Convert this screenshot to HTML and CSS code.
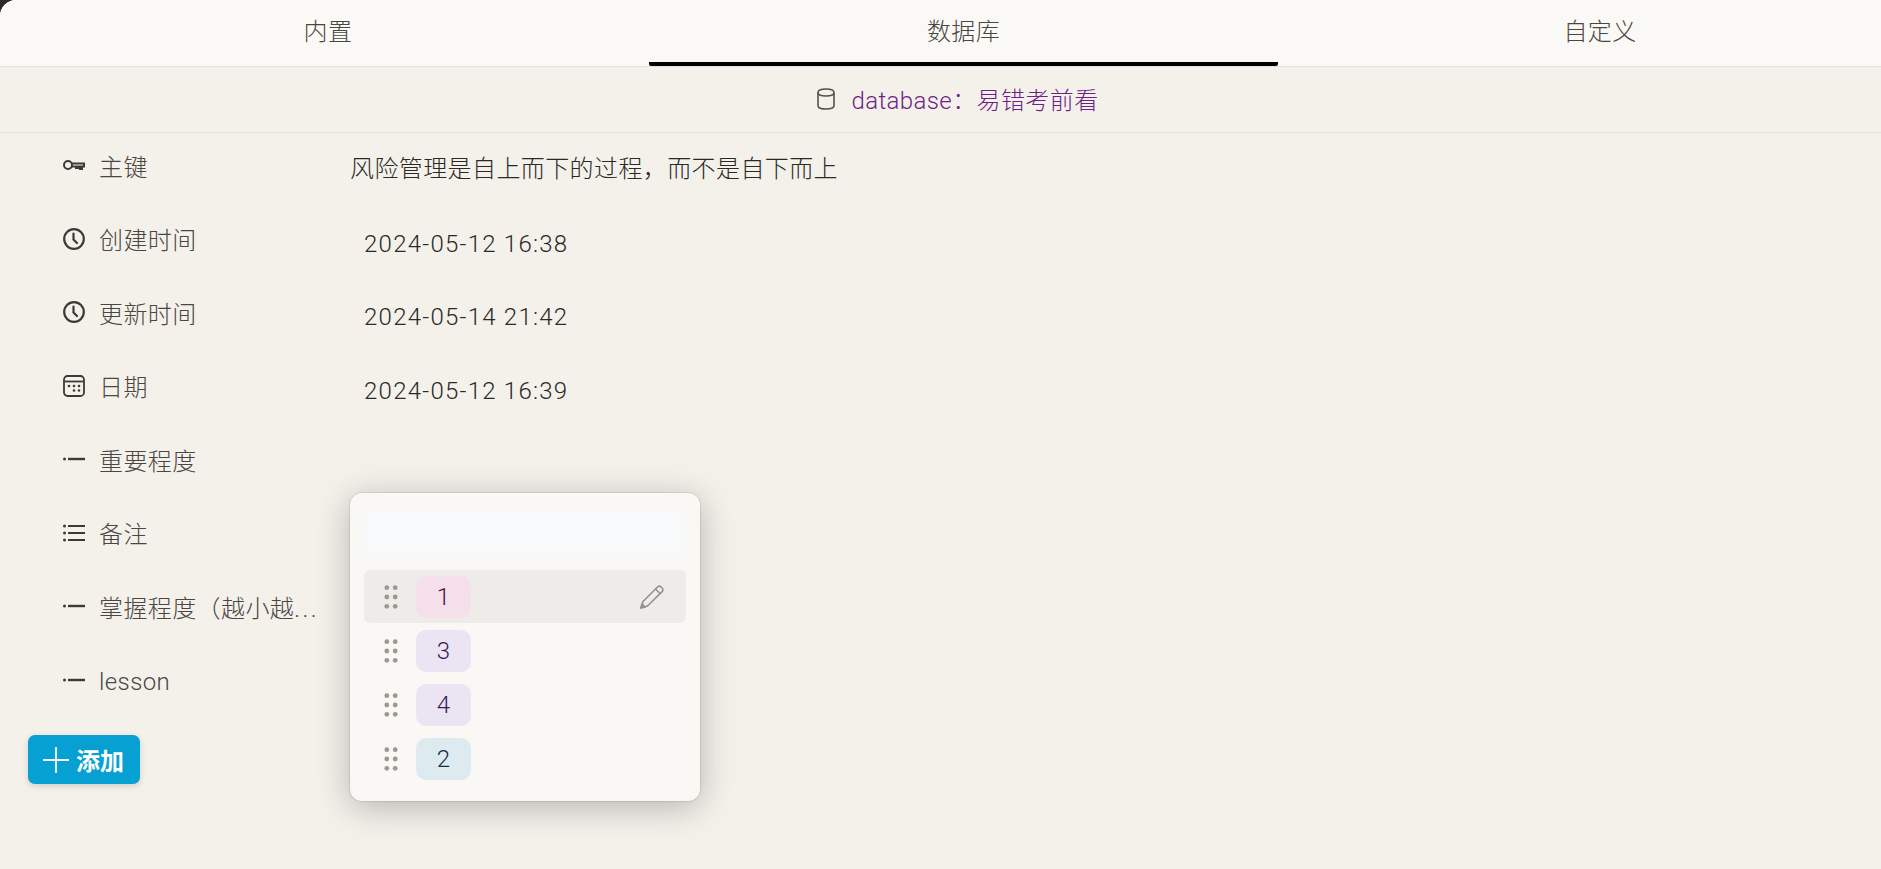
FILE: index.html
```html
<!DOCTYPE html>
<html lang="zh-CN">
<head>
    <meta charset="UTF-8">
    <title>属性面板</title>
    <link rel="stylesheet" href="styles.css">
</head>
<body>
    <div class="panel">
        <nav class="tabs">
            <div class="tab tab-first">内置</div>
            <div class="tab tab-active">数据库</div>
            <div class="tab tab-last">自定义</div>
        </nav>

        <div class="db-title">
            <svg class="db-icon" viewBox="0 0 20 24" width="20" height="24" fill="none" stroke="#55524d" stroke-width="1.6">
                <path d="M2 5.5C2 3 5 2 10 2s8 1 8 3.5v13c0 2.5-3 3.5-8 3.5s-8-1-8-3.5z"/>
                <path d="M2 5.5c0 2.5 3 3.5 8 3.5s8-1 8-3.5"/>
            </svg>
            <span class="db-name">database：易错考前看</span>
        </div>

        <main class="attrs">
            <div class="attr-row">
                <div class="attr-label">
                    <svg class="attr-icon" viewBox="0 0 22 22" fill="none" stroke="#3d3a36" stroke-width="2">
                        <circle cx="5" cy="11" r="4"/>
                        <path d="M9 9.5H21v3h-2V15h-2v-2.5h-2V14h-2v-1.5H9"/>
                    </svg>
                    <span>主键</span>
                </div>
                <div class="attr-value attr-text">风险管理是自上而下的过程，而不是自下而上</div>
            </div>
            <div class="attr-row">
                <div class="attr-label">
                    <svg class="attr-icon" viewBox="0 0 22 22" fill="none" stroke="#3d3a36" stroke-width="2.2">
                        <circle cx="11" cy="11" r="9.8"/>
                        <path d="M10.5 5.5v6l3.5 3.5" stroke-linecap="round"/>
                    </svg>
                    <span>创建时间</span>
                </div>
                <div class="attr-value attr-date">2024-05-12 16:38</div>
            </div>
            <div class="attr-row">
                <div class="attr-label">
                    <svg class="attr-icon" viewBox="0 0 22 22" fill="none" stroke="#3d3a36" stroke-width="2.2">
                        <circle cx="11" cy="11" r="9.8"/>
                        <path d="M10.5 5.5v6l3.5 3.5" stroke-linecap="round"/>
                    </svg>
                    <span>更新时间</span>
                </div>
                <div class="attr-value attr-date">2024-05-14 21:42</div>
            </div>
            <div class="attr-row">
                <div class="attr-label">
                    <svg class="attr-icon" viewBox="0 0 22 22" fill="none" stroke="#3d3a36" stroke-width="1.8">
                        <rect x="1" y="1" width="20" height="20" rx="3.5"/>
                        <path d="M1 6.5h20"/>
                        <g fill="#3d3a36" stroke="none">
                            <circle cx="6" cy="11" r="1.3"/><circle cx="11" cy="11" r="1.3"/><circle cx="16" cy="11" r="1.3"/>
                            <circle cx="11" cy="15.5" r="1.3"/><circle cx="16" cy="15.5" r="1.3"/>
                        </g>
                    </svg>
                    <span>日期</span>
                </div>
                <div class="attr-value attr-date">2024-05-12 16:39</div>
            </div>
            <div class="attr-row">
                <div class="attr-label">
                    <svg class="attr-icon" viewBox="0 0 22 22" fill="#3d3a36">
                        <circle cx="1.5" cy="11" r="1.5"/><rect x="5" y="9.8" width="17" height="2.4"/>
                    </svg>
                    <span>重要程度</span>
                </div>
            </div>
            <div class="attr-row">
                <div class="attr-label">
                    <svg class="attr-icon" viewBox="0 0 22 22" fill="#3d3a36">
                        <circle cx="1.5" cy="4" r="1.5"/><rect x="5" y="3" width="17" height="2"/>
                        <circle cx="1.5" cy="11" r="1.5"/><rect x="5" y="10" width="17" height="2"/>
                        <circle cx="1.5" cy="18" r="1.5"/><rect x="5" y="17" width="17" height="2"/>
                    </svg>
                    <span>备注</span>
                </div>
            </div>
            <div class="attr-row">
                <div class="attr-label">
                    <svg class="attr-icon" viewBox="0 0 22 22" fill="#3d3a36">
                        <circle cx="1.5" cy="11" r="1.5"/><rect x="5" y="9.8" width="17" height="2.4"/>
                    </svg>
                    <span>掌握程度（越小越<span class="ellipsis">...</span></span>
                </div>
            </div>
            <div class="attr-row">
                <div class="attr-label">
                    <svg class="attr-icon" viewBox="0 0 22 22" fill="#3d3a36">
                        <circle cx="1.5" cy="11" r="1.5"/><rect x="5" y="9.8" width="17" height="2.4"/>
                    </svg>
                    <span class="attr-latin">lesson</span>
                </div>
            </div>
            <button class="add-btn">
                <svg viewBox="0 0 26 26" width="26" height="26" stroke="#fff" stroke-width="1.8"><path d="M13 0v26M0 13h26"/></svg>
                <span>添加</span>
            </button>
        </main>

        <div class="select-menu">
            <div class="select-search"></div>
            <div class="select-item select-item-hover">
                <svg class="grip" viewBox="0 0 14 24" width="14" height="24"><use href="#grip-dots"/></svg>
                <span class="tag tag-pink">1</span>
                <svg class="edit-icon" viewBox="0 0 24 24" width="24" height="24" fill="none" stroke="#94918c" stroke-width="1.6" stroke-linejoin="round">
                    <path d="M1 23l2-6.5L17.5 2a2.6 2.6 0 0 1 3.6 0l1 1a2.6 2.6 0 0 1 0 3.6L7.5 21z"/>
                    <path d="M15.5 4L20 8.5"/>
                    <path d="M1 23l1-4 3 3z" fill="#94918c"/>
                </svg>
            </div>
            <div class="select-item">
                <svg class="grip" viewBox="0 0 14 24" width="14" height="24"><use href="#grip-dots"/></svg>
                <span class="tag tag-purple">3</span>
            </div>
            <div class="select-item">
                <svg class="grip" viewBox="0 0 14 24" width="14" height="24"><use href="#grip-dots"/></svg>
                <span class="tag tag-purple">4</span>
            </div>
            <div class="select-item">
                <svg class="grip" viewBox="0 0 14 24" width="14" height="24"><use href="#grip-dots"/></svg>
                <span class="tag tag-blue">2</span>
            </div>
        </div>
    </div>

    <svg class="svg-defs" width="0" height="0">
        <defs>
            <g id="grip-dots" fill="#9c9994">
                <circle cx="2.8" cy="2.7" r="2.4"/><circle cx="11.2" cy="2.7" r="2.4"/>
                <circle cx="2.8" cy="12" r="2.4"/><circle cx="11.2" cy="12" r="2.4"/>
                <circle cx="2.8" cy="21.3" r="2.4"/><circle cx="11.2" cy="21.3" r="2.4"/>
            </g>
        </defs>
    </svg>
</body>
</html>
```

FILE: styles.css
```css
* {
    margin: 0;
    padding: 0;
    box-sizing: border-box;
}

html, body {
    height: 100%;
    overflow: hidden;
}

body {
    font-family: "Roboto", "Noto Sans CJK SC", sans-serif;
    font-size: 24px;
    font-weight: 300;
    letter-spacing: 0.4px;
    color: #2b2926;
    background-color: #2b2a28;
}

.panel {
    position: relative;
    height: 869px;
    background-color: #f4f1eb;
    border-radius: 16px 0 0 0;
    overflow: hidden;
}

/* 顶部标签 */
.tabs {
    display: grid;
    grid-template-columns: 649px 629px 1fr;
    height: 67px;
    background-color: #faf9f5;
    border-bottom: 1px solid #e0e2e1;
}

.tab {
    display: flex;
    align-items: center;
    justify-content: center;
    height: 66px;
    padding-bottom: 7px;
    color: #4a4743;
}

.tab-first {
    padding-left: 7px;
}

.tab-last {
    padding-left: 41px;
}

.tab-active {
    padding-bottom: 3px;
    border-bottom: 4px solid #000;
    border-radius: 0 0 2px 2px;
}

.db-title {
    display: flex;
    align-items: center;
    justify-content: center;
    gap: 15px;
    height: 66px;
    padding: 0 0 2px 34px;
    border-bottom: 1px solid #e0dfdb;
}

.db-name {
    color: #6f1f85;
}

/* 属性列表 */
.attrs {
    padding-top: 1px;
}

.attr-row {
    display: flex;
    height: 73.5px;
}

.attr-label {
    display: flex;
    align-items: center;
    gap: 14px;
    width: 350px;
    height: 62px;
    padding-left: 63px;
    color: #4a4743;
}

.attr-icon {
    flex: none;
    width: 22px;
    height: 22px;
}

.attr-latin {
    padding-top: 5px;
}

.ellipsis {
    letter-spacing: 2.5px;
}

.attr-value {
    padding: 19px 0 0 14px;
    line-height: 34px;
}

.attr-date {
    letter-spacing: 1.25px;
}

.attr-text {
    padding-left: 0;
    padding-top: 18px;
}

.add-btn {
    display: flex;
    align-items: center;
    gap: 7px;
    width: 112px;
    height: 49px;
    margin: 13px 0 0 28px;
    padding-left: 15px;
    border: none;
    border-radius: 7px;
    background-color: #06a0d2;
    color: #fff;
    font-family: inherit;
    font-size: 24px;
    font-weight: 700;
    box-shadow: 0 2px 6px rgba(0, 0, 0, 0.15);
}

/* 选项下拉 */
.select-menu {
    position: absolute;
    left: 350px;
    top: 493px;
    width: 350px;
    height: 308px;
    padding: 19px 14px 0;
    background-color: #faf8f4;
    border-radius: 12px;
    box-shadow: 0 0 0 1px rgba(0, 0, 0, 0.08), 0 6px 34px rgba(0, 0, 0, 0.26);
}

.select-search {
    height: 45px;
    margin-bottom: 13px;
    background-color: #f8f9fa;
    border-radius: 7px;
}

.select-item {
    display: flex;
    align-items: center;
    height: 54px;
    padding-left: 20px;
}

.select-item-hover {
    height: 53px;
    margin-bottom: 1px;
    background-color: #eeece9;
    border-radius: 6px;
}

.grip {
    flex: none;
}

.tag {
    display: flex;
    align-items: center;
    justify-content: center;
    width: 55px;
    height: 42px;
    margin-left: 18px;
    border-radius: 10px;
}

.tag-pink {
    background-color: #f5dfeb;
    color: #4a1239;
}

.tag-purple {
    background-color: #ebe4f2;
    color: #371a52;
}

.tag-blue {
    background-color: #ddeaf0;
    color: #102c46;
}

.edit-icon {
    margin-left: auto;
    margin-right: 22px;
}

.svg-defs {
    position: absolute;
}
```
